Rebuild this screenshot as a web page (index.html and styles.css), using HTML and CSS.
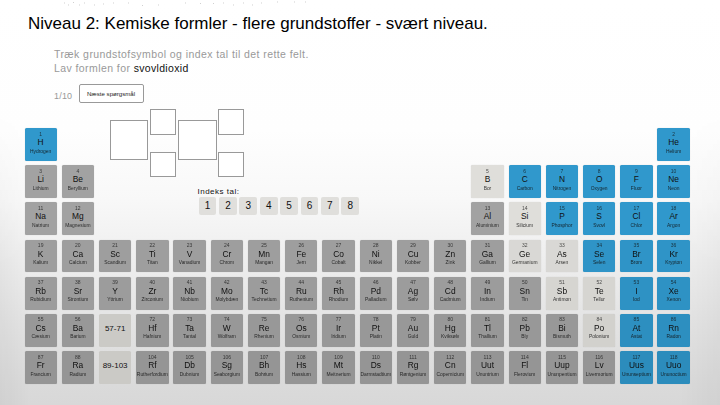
FILE: index.html
```html
<!DOCTYPE html>
<html lang="da">
<head>
<meta charset="utf-8">
<title>Kemiske formler</title>
<link rel="stylesheet" href="styles.css">
</head>
<body>
<svg class="specks" viewBox="0 0 720 8" aria-hidden="true">
  <path d="M64 3h1M68 5h1M73 2.500h1M79 5h1M84 3h1M94 5h1M103 4h1M113 3h1M128 3h1M142 5.500h1M158 5h1M185 3h1M200 3.500h1M213 3.500h1M223 3h1M233 5h1M243 3h1M252 5h1M261 3h1M277 2h1M294 2h1M305 2h1"/>
</svg>
<header class="header">
  <h1 class="title">Niveau 2: Kemiske formler - flere grundstoffer - svært niveau.</h1>
  <div class="task">
    <p class="line">Træk grundstofsymbol og index tal til det rette felt.</p>
    <p class="line">Lav formlen for <span class="compound">svovldioxid</span></p>
    <div class="progress"><span class="count">1/10</span><button class="next">Næste spørgsmål</button></div>
  </div>
</header>
<main class="table" id="table">
  <section class="workspace">
    <div class="formula">
      <div class="slot"></div>
      <div class="indices"><div class="index-slot"></div><div class="index-slot"></div></div>
      <div class="slot slot-second"></div>
      <div class="indices"><div class="index-slot"></div><div class="index-slot"></div></div>
    </div>
    <div class="index-picker">
      <div class="index-label">Indeks tal:</div>
      <div class="digits"><span class="digit">1</span><span class="digit">2</span><span class="digit">3</span><span class="digit">4</span><span class="digit">5</span><span class="digit">6</span><span class="digit">7</span><span class="digit">8</span></div>
    </div>
  </section>
</main>
<script src="table.js"></script>
</body>
</html>
```
FILE: styles.css
```css
* { box-sizing: border-box; }
html { height: 100%; }
body {
  position: relative;
  margin: 0;
  height: 405px;
  overflow: hidden;
  font-family: "Liberation Sans", Arial, sans-serif;
  color: #111;
  background: linear-gradient(#fff 0, #fefefe 130px, #f8f8f8 200px, #eee 260px, #e3e3e3 325px, #dadada 385px, #d8d8d8 405px);
}
/* Soft darkening towards the lower side edges */
body::before {
  content: "";
  position: absolute;
  inset: 0;
  z-index: -1;
  background: linear-gradient(to right, rgba(0,0,0,.035), transparent 30px, transparent 680px, rgba(0,0,0,.03));
  -webkit-mask-image: linear-gradient(transparent 110px, #000 270px);
  mask-image: linear-gradient(transparent 110px, #000 270px);
}
.specks { position: absolute; top: 0; left: 0; width: 720px; height: 8px; stroke: #bbb; stroke-width: .7; fill: none; }
.header { height: 128px; padding: 14px 0 0 28px; }
.title { margin: 0; font-size: 17px; line-height: 20px; font-weight: 400; white-space: nowrap; letter-spacing: 0; color: #000; }
.task { padding: 14px 0 0 26px; }
.line { margin: 0; font-size: 10.5px; line-height: 13.8px; letter-spacing: .42px; color: #999; white-space: nowrap; }
.compound { color: #111; letter-spacing: .32px; }
.progress { display: flex; align-items: flex-start; margin-top: 8.4px; }
.count { width: 24.5px; padding-top: 7.4px; font-size: 9px; line-height: 11px; letter-spacing: .2px; color: #999; }
.next {
  width: 65px; height: 19.5px; padding: 0; border: 1px solid #999; border-radius: 2px; background: #fff;
  font: 6.1px/17px "Liberation Sans", Arial, sans-serif; color: #222; white-space: nowrap;
}
.table {
  display: grid;
  grid-template-columns: repeat(18, 32.3px);
  grid-template-rows: repeat(7, 32.9px);
  gap: 4.3px 4.95px;
  margin-left: 24.5px;
}
.element {
  display: flex; flex-direction: column; align-items: center;
  padding-top: 2.5px; border-radius: 1.5px; white-space: nowrap; color: #111;
  background-color: #a2a2a2; overflow: hidden;
  box-shadow: 0 0 1px rgba(0,0,0,.2);
}
.number { font-size: 5px; line-height: 6px; opacity: .75; }
.symbol { font-size: 8.4px; line-height: 11px; padding-top: .5px; }
.name { font-size: 4.9px; line-height: 6px; opacity: .85; margin-top: .5px; }
.nonmetal { background-color: #3098cc; }
.metalloid { background-color: #dfdeda; }
.range { justify-content: center; padding: 0 0 4px; background-color: #cbcac6; font-size: 8px; box-shadow: none; }
.row-4 { filter: brightness(.975); }
.row-5 { filter: brightness(.96); }
.row-6 { filter: brightness(.94); }
.row-7 { filter: brightness(.92); }
.range.row-6, .range.row-7 { filter: none; }
.workspace { grid-column: 3 / 13; grid-row: 1 / 4; margin-top: -19px; padding-left: 11px; }
.formula { display: flex; align-items: center; height: 68px; }
.slot { width: 38px; height: 39.5px; margin-right: 2.5px; margin-top: -6px; border: 1px solid #999; background: #fff; }
.slot-second { width: 39px; margin-left: 2px; margin-right: 1px; }
.indices { display: flex; flex-direction: column; justify-content: space-between; height: 68px; }
.index-slot { width: 26px; height: 25.5px; border: 1px solid #999; background: #fff; }
.index-picker { margin: 9.5px 0 0 87.5px; }
.index-label { font-size: 8px; line-height: 10px; letter-spacing: .5px; }
.digits { display: flex; gap: 2.6px; padding: .8px 0 0 1.2px; }
.digit { width: 17.8px; height: 17.8px; border-radius: 2px; background: #e0dfdc; text-align: center; font-size: 10px; line-height: 17.8px; }
```
FILE: table.js
```js
// Each entry: [group, atomic number, symbol, name]
const periods = [
  [[1,1,'H','Hydrogen'],[18,2,'He','Helium']],
  [[1,3,'Li','Lithium'],[2,4,'Be','Beryllium'],[13,5,'B','Bor'],[14,6,'C','Carbon'],[15,7,'N','Nitrogen'],[16,8,'O','Oxygen'],[17,9,'F','Fluor'],[18,10,'Ne','Neon']],
  [[1,11,'Na','Natrium'],[2,12,'Mg','Magnesium'],[13,13,'Al','Aluminium'],[14,14,'Si','Silicium'],[15,15,'P','Phosphor'],[16,16,'S','Svovl'],[17,17,'Cl','Chlor'],[18,18,'Ar','Argon']],
  'K Kalium,Ca Calcium,Sc Scandium,Ti Titan,V Vanadium,Cr Chrom,Mn Mangan,Fe Jern,Co Cobalt,Ni Nikkel,Cu Kobber,Zn Zink,Ga Gallium,Ge Germanium,As Arsen,Se Selen,Br Brom,Kr Krypton',
  'Rb Rubidium,Sr Strontium,Y Yttrium,Zr Zirconium,Nb Niobium,Mo Molybdæn,Tc Technetium,Ru Ruthenium,Rh Rhodium,Pd Palladium,Ag Sølv,Cd Cadmium,In Indium,Sn Tin,Sb Antimon,Te Tellur,I Iod,Xe Xenon',
  'Cs Cæsium,Ba Barium,57-71,Hf Hafnium,Ta Tantal,W Wolfram,Re Rhenium,Os Osmium,Ir Iridium,Pt Platin,Au Guld,Hg Kviksølv,Tl Thallium,Pb Bly,Bi Bismuth,Po Polonium,At Astat,Rn Radon',
  'Fr Francium,Ra Radium,89-103,Rf Rutherfordium,Db Dubnium,Sg Seaborgium,Bh Bohrium,Hs Hassium,Mt Meitnerium,Ds Darmstadtium,Rg Røntgenium,Cn Copernicium,Uut Ununtrium,Fl Flerovium,Uup Ununpentium,Lv Livermorium,Uus Ununseptium,Uuo Ununoctium'
];
const firstNumber = { 3: 19, 4: 37, 5: 55, 6: 87 };
const nonmetals = new Set([1,2,6,7,8,9,10,15,16,17,18,34,35,36,53,54,85,86,117,118]);
const metalloids = new Set([5,14,32,33,51,52,84]);
const table = document.getElementById('table');

function addTile(row, column, number, symbol, name) {
  const tile = document.createElement('div');
  tile.className = `element row-${row}`;
  tile.style.gridRow = row;
  tile.style.gridColumn = column;
  if (!name) {
    tile.classList.add('range');
    tile.textContent = symbol;
  } else {
    if (nonmetals.has(number)) tile.classList.add('nonmetal');
    if (metalloids.has(number)) tile.classList.add('metalloid');
    for (const [kind, text] of [['number', number], ['symbol', symbol], ['name', name]]) {
      const span = document.createElement('span');
      span.className = kind;
      span.textContent = text;
      tile.append(span);
    }
  }
  table.append(tile);
}

periods.forEach((period, p) => {
  if (Array.isArray(period)) {
    period.forEach(([group, number, symbol, name]) => addTile(p + 1, group, number, symbol, name));
    return;
  }
  period.split(',').forEach((entry, i) => {
    const [symbol, name] = entry.split(' ');
    // Periods 6 and 7 fold fifteen elements into the third column.
    const number = firstNumber[p] + i + (p >= 5 && i > 2 ? 14 : 0);
    addTile(p + 1, i + 1, number, symbol, name);
  });
});
```
